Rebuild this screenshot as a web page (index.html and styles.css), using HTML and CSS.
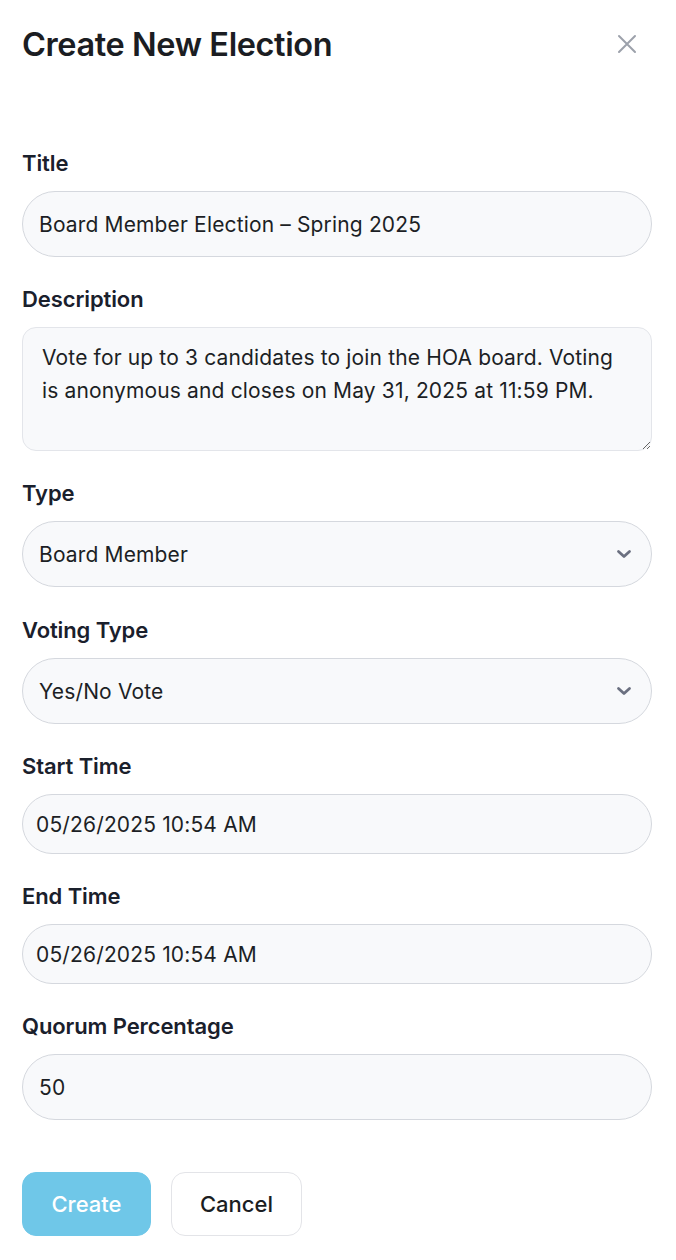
FILE: index.html
```html
<!DOCTYPE html>
<html lang="en">
<head>
<meta charset="utf-8">
<title>Create New Election</title>
<link rel="stylesheet" href="styles.css">
</head>
<body>
<div class="modal">
  <header class="modal-header">
    <h1 class="modal-title">Create New Election</h1>
    <button class="close-btn" aria-label="Close">
      <svg width="22" height="22" viewBox="0 0 22 22" fill="none" stroke="currentColor" stroke-width="2" stroke-linecap="round"><path d="M3 3 L19 19 M19 3 L3 19"/></svg>
    </button>
  </header>
  <form class="form">
    <div class="field">
      <label class="label">Title</label>
      <input class="control pill" type="text" value="Board Member Election – Spring 2025">
    </div>
    <div class="field">
      <label class="label">Description</label>
      <textarea class="control area">Vote for up to 3 candidates to join the HOA board. Voting is anonymous and closes on May 31, 2025 at 11:59 PM.</textarea>
    </div>
    <div class="field">
      <label class="label">Type</label>
      <div class="select-wrap">
        <select class="control pill select"><option>Board Member</option></select>
        <svg class="chevron" width="16" height="10" viewBox="0 0 16 10" fill="none" stroke="currentColor" stroke-width="2.8" stroke-linecap="round" stroke-linejoin="round"><path d="M2.5 2.5 L8 7.5 L13.5 2.5"/></svg>
      </div>
    </div>
    <div class="field f-gap">
      <label class="label">Voting Type</label>
      <div class="select-wrap">
        <select class="control pill select"><option>Yes/No Vote</option></select>
        <svg class="chevron" width="16" height="10" viewBox="0 0 16 10" fill="none" stroke="currentColor" stroke-width="2.8" stroke-linecap="round" stroke-linejoin="round"><path d="M2.5 2.5 L8 7.5 L13.5 2.5"/></svg>
      </div>
    </div>
    <div class="field">
      <label class="label">Start Time</label>
      <input class="control pill date" type="text" value="05/26/2025 10:54 AM">
    </div>
    <div class="field">
      <label class="label">End Time</label>
      <input class="control pill date" type="text" value="05/26/2025 10:54 AM">
    </div>
    <div class="field">
      <label class="label">Quorum Percentage</label>
      <input class="control pill" type="text" value="50">
    </div>
    <div class="actions">
      <button type="button" class="btn btn-primary">Create</button>
      <button type="button" class="btn btn-secondary">Cancel</button>
    </div>
  </form>
</div>
</body>
</html>
```

FILE: styles.css
```css
* { box-sizing: border-box; }
html, body { margin: 0; padding: 0; background: #ffffff; }
body {
  font-family: Inter, "Noto Sans", "Liberation Sans", sans-serif;
  color: #1f2329;
}
.modal {
  padding: 22px 24px 24px 22px;
}
.modal-header {
  display: flex;
  align-items: center;
  justify-content: space-between;
  height: 44px;
}
.modal-title {
  margin: 0;
  font-size: 32.5px;
  font-weight: 600;
  letter-spacing: -0.4px;
  color: #1b1d22;
}
.close-btn {
  border: 0;
  background: none;
  padding: 0;
  margin-right: 14px;
  color: #9ca1ab;
  display: flex;
  cursor: pointer;
}
.form {
  margin-top: 83px;
  display: flex;
  flex-direction: column;
  gap: 28px;
}
.field {
  display: flex;
  flex-direction: column;
  gap: 14px;
}
.field.f-gap {
  margin-top: 1px;
}
.label {
  font-size: 22px;
  line-height: 28px;
  font-weight: 600;
  letter-spacing: -0.1px;
  color: #1a202c;
}
.control {
  width: 100%;
  font-family: inherit;
  font-size: 21px;
  color: #1c1f25;
  background: #f8f9fb;
  border: 1px solid #d5d8de;
  outline: none;
  letter-spacing: 0.15px;
}
.pill {
  height: 66px;
  border-radius: 33px;
  padding: 0 16px;
}
.pill.date {
  height: 60px;
  border-radius: 30px;
  padding: 0 13px;
}
.area {
  height: 124px;
  border-radius: 14px;
  border-color: #e3e5ea;
  padding: 13px 19px;
  line-height: 33px;
  resize: vertical;
}
.select-wrap {
  position: relative;
}
.select {
  appearance: none;
  -webkit-appearance: none;
}
.chevron {
  position: absolute;
  right: 20px;
  top: 28px;
  color: #6b7080;
  pointer-events: none;
}
.actions {
  display: flex;
  gap: 20px;
  margin-top: 24px;
}
.btn {
  font-family: inherit;
  font-size: 22px;
  font-weight: 500;
  height: 64px;
  border-radius: 14px;
  padding: 0 20px;
  cursor: pointer;
}
.btn-primary {
  background: #6fc7e8;
  color: #ffffff;
  border: 1px solid #6fc7e8;
  width: 129px;
}
.btn-secondary {
  background: #ffffff;
  color: #1b1d22;
  border: 1px solid #e3e4e8;
  width: 131px;
}
```
